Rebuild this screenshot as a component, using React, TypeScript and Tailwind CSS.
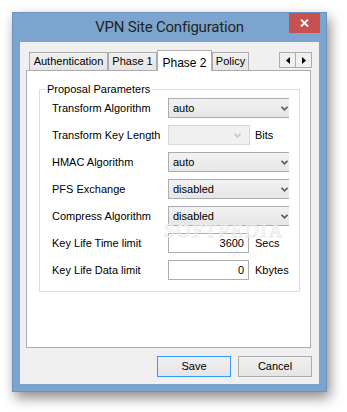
import React from 'react';

const ui = { fontFamily: '"Liberation Sans", Arial, sans-serif' };

function Chevron({ disabled }: { disabled?: boolean }) {
  return (
    <svg width="7" height="5" viewBox="0 0 7 5" className="shrink-0">
      <path d="M0.5 0.8 L3.5 3.8 L6.5 0.8" fill="none" stroke={disabled ? '#c4c4c4' : '#5a5a5a'} strokeWidth="1.6" />
    </svg>
  );
}

function Combo({ value, disabled, width = 'w-[121px]' }: { value?: string; disabled?: boolean; width?: string }) {
  return (
    <div
      className={`${width} h-[20px] flex items-center justify-between pl-[4px] pr-[1px] border ${
        disabled
          ? 'border-[#d9d9d9] bg-[#f0f0f0] pr-[8px]'
          : 'border-[#acacac] border-r-0 bg-gradient-to-b from-[#f2f2f2] to-[#e6e6e6]'
      }`}
    >
      <span>{value}</span>
      <Chevron disabled={disabled} />
    </div>
  );
}

function NumBox({ value }: { value: string }) {
  return (
    <div className="w-[81px] h-[20px] border border-[#abadb3] bg-white flex items-center justify-end pr-[4px]">
      {value}
    </div>
  );
}

function Row({ label, children }: { label: string; children: React.ReactNode }) {
  return (
    <div className="flex items-center h-[20px]">
      <div className="w-[116px] shrink-0 whitespace-nowrap">{label}</div>
      {children}
    </div>
  );
}

function Tab({ label, active, width }: { label: string; active?: boolean; width: string }) {
  if (active) {
    return (
      <div className={`${width} h-[21px] -mb-[1px] bg-white border border-b-0 border-[#acacac] flex justify-center pt-[3px] text-[12px]`}>
        {label}
      </div>
    );
  }
  return (
    <div className={`${width} h-[18px] bg-gradient-to-b from-[#f0f0f0] to-[#e5e5e5] border border-b-0 border-[#acacac] flex items-center justify-center`}>
      {label}
    </div>
  );
}

export default function App() {
  return (
    <div className="relative w-[347px] h-[412px] bg-white pt-[12px] pl-[12px] text-[11px] text-black" style={ui}>
      <div className="w-[315px] h-[380px] bg-[#7ba4cf] border border-[#6b93be] shadow-[3px_6px_12px_rgba(0,0,0,0.45)] flex flex-col px-[7px] pb-[7px]">
        {/* title bar */}
        <div className="relative h-[29px] flex items-center justify-center -mx-[7px]">
          <span className="text-[15px] text-[#242424] tracking-[-0.2px]" style={{ fontFamily: 'Roboto, "Liberation Sans", sans-serif' }}>
            VPN Site Configuration
          </span>
          <div className="absolute top-0 right-[6px] w-[31px] h-[20px] bg-[#c75050] flex items-center justify-center">
            <svg width="9" height="8" viewBox="0 0 9 8">
              <path d="M1 0.5 L8 7.5 M8 0.5 L1 7.5" stroke="#fff" strokeWidth="1.8" />
            </svg>
          </div>
        </div>

        {/* client */}
        <div className="flex-1 bg-[#f0f0f0] flex flex-col pt-[8px] pl-[6px] pr-[8px]">
          <div className="relative z-10 flex items-end h-[20px] pl-[3px]">
            <Tab label="Authentication" width="w-[79px]" />
            <Tab label="Phase 1" width="w-[49px]" />
            <Tab label="Phase 2" width="w-[55px]" active />
            <Tab label="Policy" width="w-[37px]" />
            <div className="ml-auto -mr-[1px] self-start mt-[2px] flex">
              <div className="w-[17px] h-[16px] border border-[#acacac] bg-[#f0f0f0] flex items-center justify-center">
                <svg width="4" height="7" viewBox="0 0 4 7"><path d="M4 0 L0 3.5 L4 7 Z" fill="#000" /></svg>
              </div>
              <div className="w-[16px] h-[16px] border border-l-0 border-[#acacac] bg-[#f0f0f0] flex items-center justify-center">
                <svg width="4" height="7" viewBox="0 0 4 7"><path d="M0 0 L4 3.5 L0 7 Z" fill="#000" /></svg>
              </div>
            </div>
          </div>

          <div className="h-[278px] bg-white border border-[#acacac]">
            <fieldset className="ml-[12px] mt-[12px] w-[261px] h-[209px] border border-[#d5dfe5] pl-[6px] pt-[2px]">
              <legend className="px-[1px] leading-[13px]">Proposal Parameters</legend>
              <div className="flex flex-col gap-[7px] pl-[6px]">
                <Row label="Transform Algorithm">
                  <Combo value="auto" />
                </Row>
                <Row label="Transform Key Length">
                  <Combo disabled width="w-[82px]" />
                  <span className="ml-[5px]">Bits</span>
                </Row>
                <Row label="HMAC Algorithm">
                  <Combo value="auto" />
                </Row>
                <Row label="PFS Exchange">
                  <Combo value="disabled" />
                </Row>
                <Row label="Compress Algorithm">
                  <Combo value="disabled" />
                </Row>
                <Row label="Key Life Time limit">
                  <NumBox value="3600" />
                  <span className="ml-[6px]">Secs</span>
                </Row>
                <Row label="Key Life Data limit">
                  <NumBox value="0" />
                  <span className="ml-[6px]">Kbytes</span>
                </Row>
              </div>
            </fieldset>
          </div>

          <div className="flex justify-end gap-[7px] mt-[8px] -mr-[1px]">
            <button className="w-[74px] h-[21px] border border-[#3399ff] bg-gradient-to-b from-[#f0f0f0] to-[#e5e5e5]">Save</button>
            <button className="w-[74px] h-[21px] border border-[#acacac] bg-gradient-to-b from-[#f0f0f0] to-[#e5e5e5]">Cancel</button>
          </div>
        </div>
      </div>

      {/* watermark */}
      <div className="pointer-events-none absolute left-[164px] top-[222px] text-[19px] leading-[18px] tracking-[2px] text-transparent [-webkit-text-stroke:1px_#ececec]" style={{ fontFamily: '"Liberation Serif", serif' }}>
        SOFTPEDIA
      </div>
    </div>
  );
}
